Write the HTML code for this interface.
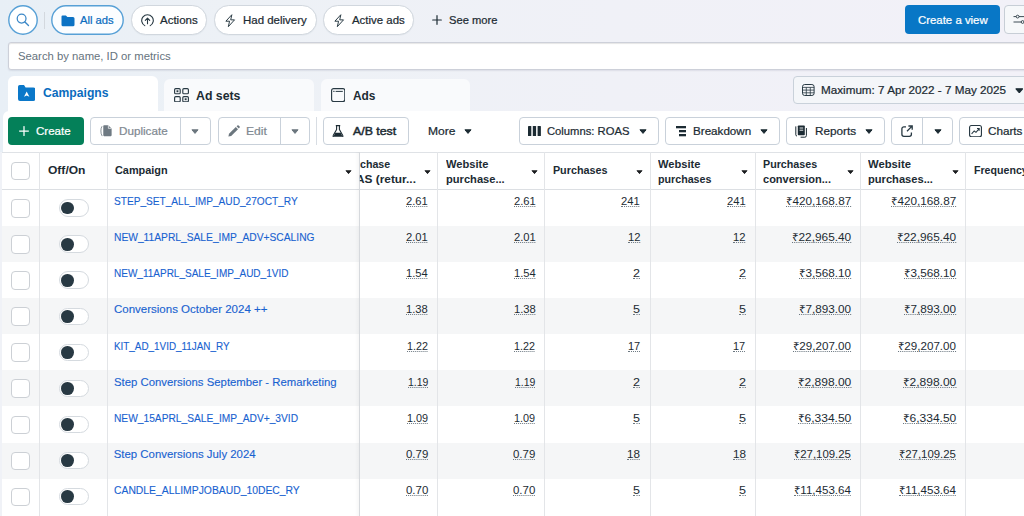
<!DOCTYPE html>
<html lang="en">
<head>
<meta charset="utf-8">
<title>Ads Manager</title>
<style>
*{box-sizing:border-box;margin:0;padding:0}
html,body{width:1024px;height:516px;overflow:hidden}
body{font-family:"Liberation Sans",sans-serif;font-size:11px;color:#1c2b33;background:#f0f2f7;position:relative}
.abs{position:absolute}
#bg{left:0;top:0;width:1024px;height:152px;background:linear-gradient(90deg,#e8eff6 0%,#edf1f6 22%,#f0f1f7 60%,#f2f1f8 100%)}
.pill{position:absolute;top:5.2px;height:29.4px;border-radius:14.7px;border:1px solid #d1d7de;background:#fff;box-shadow:0 0.5px 1px rgba(40,60,90,.06)}
.btn{position:absolute;top:117.25px;height:27.5px;border:1px solid #c9d1da;border-radius:4px;background:#fff}
.caret{position:absolute;width:8px;height:5.2px}
.hc{position:absolute;width:7px;height:4.3px;top:169.6px}
.tab{position:absolute;border-radius:6px 6px 0 0}
#tbl{left:2px;top:151.7px;width:1022px;height:365px;background:#fff;border-top:1px solid #dfe2e6}
.vl{position:absolute;top:152px;width:1px;height:364px;background:#e3e5e8}
.row{position:absolute;left:2px;width:1022px;background:#f5f6f7}
.t{position:absolute;line-height:14px;white-space:nowrap;transform-origin:0 50%;display:block}
.cb{position:absolute;left:11px;width:18.5px;height:18.5px;border:1px solid #ccd0d5;border-radius:4px;background:#fff}
.tg{position:absolute;left:59px;width:29.5px;height:17.5px;border:1px solid #d5dadf;border-radius:9px;background:#fff}
.tg i{position:absolute;left:0.9px;top:1.4px;width:12.8px;height:12.8px;border-radius:50%;background:#283943;display:block}
</style>
</head>
<body>
<div id="bg" class="abs"></div>

<!-- top filter row -->
<svg class="abs" style="left:8px;top:5px" width="30" height="30" viewBox="0 0 30 30"><circle cx="15" cy="15" r="14.2" fill="#fff" stroke="#57a0d6" stroke-width="1.4"/></svg>
<svg class="abs" style="left:15px;top:12px" width="16" height="16" viewBox="0 0 16 16"><circle cx="6.6" cy="6.6" r="4.4" fill="none" stroke="#3b87c7" stroke-width="1.25"/><path d="M9.9 9.9 L13.5 13.5" stroke="#3b87c7" stroke-width="1.35" stroke-linecap="round"/></svg>
<div class="abs" style="left:44px;top:12px;width:1px;height:17px;background:#d3d8de"></div>

<svg class="abs" style="left:51px;top:5px" width="73" height="30" viewBox="0 0 73 30"><rect x="0.8" y="0.8" width="71.4" height="28.4" rx="14.2" fill="#fbfdff" stroke="#57a0d6" stroke-width="1.4"/></svg>
<svg class="abs" style="left:61px;top:14.5px" width="14" height="12" viewBox="0 0 14 12"><path d="M1.5 0.4 H4.9 L6.4 1.9 H12 A1.5 1.5 0 0 1 13.5 3.4 V9.8 A1.5 1.5 0 0 1 12 11.3 H2 A1.5 1.5 0 0 1 0.5 9.8 V1.4 A1 1 0 0 1 1.5 0.4Z" fill="#0b72c4"/></svg>
<div class="pill" style="left:131px;width:76px">
  <svg class="abs" style="left:9px;top:7.7px" width="13" height="13" viewBox="0 0 13 13"><path d="M3.78 11.62 A5.8 5.8 0 1 1 9.22 11.62" fill="none" stroke="#283943" stroke-width="1.1" stroke-linecap="round"/><path d="M6.5 9.8 V4.4 M4.3 6.4 L6.5 4.2 L8.7 6.4" fill="none" stroke="#283943" stroke-width="1.1" stroke-linecap="round" stroke-linejoin="round"/></svg>
</div>
<div class="pill" style="left:214px;width:103px">
  <svg class="abs" style="left:10.2px;top:7.6px" width="10.4" height="13.4" viewBox="0 0 10 13"><path d="M6.6 0.7 L0.8 7 H4.4 L3.2 12.3 L9.2 5.7 H5.5 Z" fill="none" stroke="#283943" stroke-width="0.95" stroke-linejoin="round"/></svg>
</div>
<div class="pill" style="left:323px;width:91px">
  <svg class="abs" style="left:10.2px;top:7.6px" width="10.4" height="13.4" viewBox="0 0 10 13"><path d="M6.6 0.7 L0.8 7 H4.4 L3.2 12.3 L9.2 5.7 H5.5 Z" fill="none" stroke="#283943" stroke-width="0.95" stroke-linejoin="round"/></svg>
</div>
<svg class="abs" style="left:431.5px;top:15.2px" width="10" height="10" viewBox="0 0 10 10"><path d="M5 0.7 V9.3 M0.7 5 H9.3" stroke="#1c2b33" stroke-width="1.2" stroke-linecap="round"/></svg>

<div class="abs" style="left:905.3px;top:5.1px;width:95px;height:28.6px;border-radius:4px;background:#0877c6"></div>
<div class="abs" style="left:1003.8px;top:5.1px;width:40px;height:28.6px;border-radius:4px;border:1px solid #c7ced6;background:#f6f8fa">
  <svg class="abs" style="left:8px;top:8px" width="14" height="12" viewBox="0 0 14 12"><path d="M0.5 2.6 H3.2 M6 2.6 H14 M0.5 8 H8.2 M11 8 H14" stroke="#283943" stroke-width="0.9"/><circle cx="4.6" cy="2.6" r="1.4" fill="none" stroke="#283943" stroke-width="0.9"/><circle cx="9.6" cy="8" r="1.4" fill="none" stroke="#283943" stroke-width="0.9"/></svg>
</div>

<!-- search -->
<div class="abs" style="left:8px;top:42.3px;width:1030px;height:27.4px;border:1px solid #cdd0d9;border-radius:3px;background:#fff;box-shadow:0 1px 1.5px rgba(60,60,100,.10),inset 0 1px 1px rgba(0,0,0,.10)"></div>

<!-- tabs -->
<div class="tab" style="left:8px;top:76px;width:150px;height:36px;background:#fff"></div>
<div class="tab" style="left:164px;top:79.2px;width:150px;height:32.4px;background:#f9fafc"></div>
<div class="tab" style="left:320.5px;top:79.2px;width:149.5px;height:32.4px;background:#f9fafc"></div>
<svg class="abs" style="left:18px;top:85.3px" width="17.4" height="16" viewBox="0 0 17.4 16"><path d="M1.7 0 H6 L7.6 2.4 H15.4 A2 2 0 0 1 17.4 4.4 V14 A2 2 0 0 1 15.4 16 H2 A2 2 0 0 1 0 14 V1.7 A1.7 1.7 0 0 1 1.7 0Z" fill="#0b78c9"/><path d="M8.7 6.6 L11.4 11.8 L8.7 10.5 L6 11.8 Z" fill="#fff"/></svg>
<svg class="abs" style="left:174px;top:88px" width="15" height="14.4" viewBox="0 0 15 14.4"><g fill="none" stroke="#283943" stroke-width="1.15"><rect x="0.6" y="0.6" width="5.6" height="5.2" rx="1.1"/><rect x="8.8" y="0.6" width="5.6" height="5.2" rx="1.1"/><rect x="0.6" y="8.6" width="5.6" height="5.2" rx="1.1"/><rect x="8.8" y="8.6" width="5.6" height="5.2" rx="1.1"/></g><rect x="2.5" y="2.3" width="1.9" height="1.9" fill="#283943"/><rect x="10.7" y="10.3" width="1.9" height="1.9" fill="#283943"/></svg>
<svg class="abs" style="left:330.6px;top:87.7px" width="14.4" height="14.2" viewBox="0 0 14.4 14.2"><rect x="0.6" y="0.6" width="13.2" height="13" rx="2" fill="none" stroke="#283943" stroke-width="1.15"/><path d="M4.6 3.4 H11.8" stroke="#283943" stroke-width="1"/><rect x="2.3" y="2.8" width="1.2" height="1.2" fill="#283943"/></svg>

<!-- date range -->
<div class="abs" style="left:792.5px;top:76px;width:250px;height:28.2px;border:1px solid #c9d1da;border-radius:4px;background:#f4f6f9"></div>
<svg class="abs" style="left:802.4px;top:84.2px" width="12.6" height="12" viewBox="0 0 12.6 12"><rect x="0.5" y="0.5" width="11.6" height="11" rx="2.2" fill="none" stroke="#283943" stroke-width="1"/><path d="M0.5 3.4 H12.1 M0.5 6.1 H12.1 M0.5 8.8 H12.1 M4.3 3.4 V11.5 M8.3 3.4 V11.5" stroke="#283943" stroke-width="0.8"/></svg>
<svg class="caret" style="left:1014.8px;top:87.6px;width:8.6px;height:5.6px" viewBox="0 0 8 5.2"><path d="M0.9 0.8 H7.1 L4 4.4 Z" fill="#1c2b33" stroke="#1c2b33" stroke-width="1" stroke-linejoin="round"/></svg>

<!-- toolbar -->
<div class="abs" style="left:2.5px;top:111.2px;width:1022px;height:42px;background:#fff;border-radius:6px 0 0 0"></div>
<div class="abs" style="left:8px;top:117px;width:76px;height:28px;border-radius:4px;background:#048059"></div>
<svg class="abs" style="left:19.4px;top:126.4px" width="10" height="10" viewBox="0 0 10 10"><path d="M5 0.6 V9.4 M0.6 5 H9.4" stroke="#fff" stroke-width="1.25" stroke-linecap="round"/></svg>

<div class="btn" style="left:90px;width:121px"><i class="abs" style="left:89.2px;top:0;width:1px;height:25.5px;background:#c9d1da"></i>
  <svg class="abs" style="left:8.6px;top:6.6px" width="12.2" height="11.8" viewBox="0 0 13.4 13"><path d="M2.2 1.4 C0.6 3.6 0.4 9.4 2.4 12.2" fill="none" stroke="#6f7a83" stroke-width="0.9"/><path d="M3.6 1.2 A0.9 0.9 0 0 1 4.5 0.3 H9 L12.8 3.8 V11.4 A0.9 0.9 0 0 1 11.9 12.3 H4.5 A0.9 0.9 0 0 1 3.6 11.4 Z" fill="#6f7a83"/><path d="M9.2 0.5 V3.7 H12.6" fill="none" stroke="#fff" stroke-width="0.8"/></svg>
  <svg class="caret" style="left:100.4px;top:10.5px" viewBox="0 0 8 5.2"><path d="M0.9 0.8 H7.1 L4 4.4 Z" fill="#6b767e" stroke="#6b767e" stroke-width="1" stroke-linejoin="round"/></svg>
</div>
<div class="btn" style="left:217.5px;width:92.25px"><i class="abs" style="left:61.4px;top:0;width:1px;height:25.5px;background:#c9d1da"></i>
  <svg class="abs" style="left:9px;top:6.8px" width="12" height="12" viewBox="0 0 12 12"><path d="M0.4 11.6 L1 8.8 L7.8 2 L10 4.2 L3.2 11 Z" fill="#6b767e"/><path d="M8.6 1.2 L9.4 0.4 A0.9 0.9 0 0 1 10.6 0.4 L11.6 1.4 A0.9 0.9 0 0 1 11.6 2.6 L10.8 3.4 Z" fill="#6b767e"/></svg>
  <svg class="caret" style="left:72.2px;top:10.5px" viewBox="0 0 8 5.2"><path d="M0.9 0.8 H7.1 L4 4.4 Z" fill="#6b767e" stroke="#6b767e" stroke-width="1" stroke-linejoin="round"/></svg>
</div>
<div class="abs" style="left:316.3px;top:117px;width:1px;height:28px;background:#d8dde3"></div>
<div class="btn" style="left:323px;width:85.5px">
  <svg class="abs" style="left:8.2px;top:6.6px" width="12" height="12.6" viewBox="0 0 12 12.6"><path d="M3.8 0.6 H8.2 M4.6 0.6 V4.6 L1.2 10.6 A0.9 0.9 0 0 0 2 12 H10 A0.9 0.9 0 0 0 10.8 10.6 L7.4 4.6 V0.6" fill="none" stroke="#1c2b33" stroke-width="1.1" stroke-linejoin="round"/><path d="M3.3 7.8 H8.7 L10.5 11.4 H1.5 Z" fill="#1c2b33"/></svg>
</div>
<svg class="caret" style="left:463.6px;top:128.9px" viewBox="0 0 8 5.2"><path d="M0.9 0.8 H7.1 L4 4.4 Z" fill="#1c2b33" stroke="#1c2b33" stroke-width="1" stroke-linejoin="round"/></svg>

<div class="btn" style="left:519px;width:140px">
  <svg class="abs" style="left:7.8px;top:8px" width="13" height="10.2" viewBox="0 0 13 10.2"><rect x="0" y="0" width="3.3" height="10.2" rx="0.6" fill="#1c2b33"/><rect x="4.8" y="0" width="3.3" height="10.2" rx="0.6" fill="#1c2b33"/><rect x="9.6" y="0" width="3.3" height="10.2" rx="0.6" fill="#1c2b33"/></svg>
  <svg class="caret" style="left:119px;top:10.5px" viewBox="0 0 8 5.2"><path d="M0.9 0.8 H7.1 L4 4.4 Z" fill="#1c2b33" stroke="#1c2b33" stroke-width="1" stroke-linejoin="round"/></svg>
</div>
<div class="btn" style="left:665px;width:114.75px">
  <svg class="abs" style="left:9.7px;top:8px" width="10.6" height="10.4" viewBox="0 0 10.6 10.4"><rect x="0" y="0" width="10.6" height="2.3" fill="#1c2b33"/><rect x="3" y="4" width="7.6" height="2.3" fill="#1c2b33"/><rect x="3" y="8" width="7.6" height="2.3" fill="#1c2b33"/></svg>
  <svg class="caret" style="left:94.4px;top:10.5px" viewBox="0 0 8 5.2"><path d="M0.9 0.8 H7.1 L4 4.4 Z" fill="#1c2b33" stroke="#1c2b33" stroke-width="1" stroke-linejoin="round"/></svg>
</div>
<div class="btn" style="left:786px;width:99px">
  <svg class="abs" style="left:8px;top:6.6px" width="13" height="13" viewBox="0 0 13 13"><path d="M0.8 1.4 V9.8 A1.2 1.2 0 0 0 2 11" fill="none" stroke="#1c2b33" stroke-width="1"/><rect x="2.8" y="0.4" width="7" height="9.8" rx="0.8" fill="#1c2b33"/><path d="M4.6 3 H8.2 M4.6 5.2 H8.2" stroke="#fff" stroke-width="0.9"/><path d="M11.4 3 V10.6 A1.6 1.6 0 0 1 9.8 12.2 H5.6" fill="none" stroke="#1c2b33" stroke-width="1"/></svg>
  <svg class="caret" style="left:78.2px;top:10.5px" viewBox="0 0 8 5.2"><path d="M0.9 0.8 H7.1 L4 4.4 Z" fill="#1c2b33" stroke="#1c2b33" stroke-width="1" stroke-linejoin="round"/></svg>
</div>
<div class="btn" style="left:891px;width:62px"><i class="abs" style="left:30px;top:0;width:1px;height:25.5px;background:#c9d1da"></i>
  <svg class="abs" style="left:8.5px;top:7px" width="12.6" height="12" viewBox="0 0 12.6 12"><path d="M5 1.8 H2.9 A2 2 0 0 0 0.9 3.8 V9.3 A2 2 0 0 0 2.9 11.3 H8.4 A2 2 0 0 0 10.4 9.3 V7.4" fill="none" stroke="#283943" stroke-width="1.3"/><path d="M6 6.2 L10.8 1.4 M7.4 1 H11.2 V4.8" fill="none" stroke="#283943" stroke-width="1.3"/></svg>
  <svg class="caret" style="left:41.6px;top:10.5px" viewBox="0 0 8 5.2"><path d="M0.9 0.8 H7.1 L4 4.4 Z" fill="#1c2b33" stroke="#1c2b33" stroke-width="1" stroke-linejoin="round"/></svg>
</div>
<div class="btn" style="left:959px;width:80px">
  <svg class="abs" style="left:8.7px;top:6.8px" width="13" height="12.4" viewBox="0 0 13 12.4"><rect x="0.55" y="0.55" width="11.9" height="11.3" rx="2" fill="none" stroke="#283943" stroke-width="1.15"/><path d="M2.6 8.8 L5.2 6 L7 7.4 L10 3.8 M8 3.6 H10.2 V5.8" fill="none" stroke="#283943" stroke-width="1.05"/></svg>
</div>

<!-- table -->
<div id="tbl" class="abs"></div>
<div class="row" style="top:226.08px;height:36.08px"></div>
<div class="row" style="top:298.24px;height:36.08px"></div>
<div class="row" style="top:370.40px;height:36.08px"></div>
<div class="row" style="top:442.56px;height:36.08px"></div>
<div class="abs" style="left:2px;top:189.1px;width:1022px;height:1px;background:#dcdfe3"></div>
<div class="vl" style="left:39.3px"></div>
<div class="vl" style="left:107px"></div>
<div class="vl" style="left:437px"></div>
<div class="vl" style="left:544px"></div>
<div class="vl" style="left:649.5px"></div>
<div class="vl" style="left:755px"></div>
<div class="vl" style="left:860px"></div>
<div class="vl" style="left:965px"></div>
<div class="abs" style="left:358.8px;top:152px;width:1.6px;height:364px;background:#d6d9dd"></div>
<div class="abs" style="left:355px;top:152px;width:4px;height:364px;background:linear-gradient(90deg,rgba(0,0,0,0),rgba(0,0,0,.03))"></div>

<div class="cb" style="top:161.7px"></div>
<svg class="hc" style="left:344.9px" viewBox="0 0 8 5.2"><path d="M0.9 0.8 H7.1 L4 4.4 Z" fill="#1c1e21" stroke="#1c1e21" stroke-width="1" stroke-linejoin="round"/></svg>
<svg class="hc" style="left:424.0px" viewBox="0 0 8 5.2"><path d="M0.9 0.8 H7.1 L4 4.4 Z" fill="#1c1e21" stroke="#1c1e21" stroke-width="1" stroke-linejoin="round"/></svg>
<svg class="hc" style="left:530.8px" viewBox="0 0 8 5.2"><path d="M0.9 0.8 H7.1 L4 4.4 Z" fill="#1c1e21" stroke="#1c1e21" stroke-width="1" stroke-linejoin="round"/></svg>
<svg class="hc" style="left:635.9px" viewBox="0 0 8 5.2"><path d="M0.9 0.8 H7.1 L4 4.4 Z" fill="#1c1e21" stroke="#1c1e21" stroke-width="1" stroke-linejoin="round"/></svg>
<svg class="hc" style="left:741.0px" viewBox="0 0 8 5.2"><path d="M0.9 0.8 H7.1 L4 4.4 Z" fill="#1c1e21" stroke="#1c1e21" stroke-width="1" stroke-linejoin="round"/></svg>
<svg class="hc" style="left:846.5px" viewBox="0 0 8 5.2"><path d="M0.9 0.8 H7.1 L4 4.4 Z" fill="#1c1e21" stroke="#1c1e21" stroke-width="1" stroke-linejoin="round"/></svg>
<svg class="hc" style="left:951.7px" viewBox="0 0 8 5.2"><path d="M0.9 0.8 H7.1 L4 4.4 Z" fill="#1c1e21" stroke="#1c1e21" stroke-width="1" stroke-linejoin="round"/></svg>

<div class="cb" style="top:199.0px"></div>
<div class="tg" style="top:199.3px"><i></i></div>
<div class="cb" style="top:235.1px"></div>
<div class="tg" style="top:235.4px"><i></i></div>
<div class="cb" style="top:271.2px"></div>
<div class="tg" style="top:271.4px"><i></i></div>
<div class="cb" style="top:307.3px"></div>
<div class="tg" style="top:307.5px"><i></i></div>
<div class="cb" style="top:343.4px"></div>
<div class="tg" style="top:343.6px"><i></i></div>
<div class="cb" style="top:379.4px"></div>
<div class="tg" style="top:379.7px"><i></i></div>
<div class="cb" style="top:415.5px"></div>
<div class="tg" style="top:415.8px"><i></i></div>
<div class="cb" style="top:451.6px"></div>
<div class="tg" style="top:451.9px"><i></i></div>
<div class="cb" style="top:487.7px"></div>
<div class="tg" style="top:487.9px"><i></i></div>
<span class="t" style="left:80.15px;top:13.44px;font-size:11px;color:#0b6cbe;transform:scaleX(1.0202);-webkit-text-stroke:0.22px;">All ads</span>
<span class="t" style="left:159.65px;top:13.44px;font-size:11px;color:#1c2b33;transform:scaleX(1.0450);-webkit-text-stroke:0.22px;">Actions</span>
<span class="t" style="left:242.65px;top:13.44px;font-size:11px;color:#1c2b33;transform:scaleX(1.0419);-webkit-text-stroke:0.22px;">Had delivery</span>
<span class="t" style="left:351.65px;top:13.44px;font-size:11px;color:#1c2b33;transform:scaleX(1.0384);-webkit-text-stroke:0.22px;">Active ads</span>
<span class="t" style="left:449.40px;top:13.44px;font-size:11px;color:#1c2b33;transform:scaleX(1.0157);-webkit-text-stroke:0.22px;">See more</span>
<span class="t" style="left:918.15px;top:12.94px;font-size:11px;color:#fff;transform:scaleX(1.0362);-webkit-text-stroke:0.22px;">Create a view</span>
<span class="t" style="left:18.15px;top:49.09px;font-size:11px;color:#66737d;transform:scaleX(1.0279);">Search by name, ID or metrics</span>
<span class="t" style="left:43.05px;top:86.44px;font-size:12px;color:#0b6cbe;font-weight:bold;transform:scaleX(1.0126);">Campaigns</span>
<span class="t" style="left:195.90px;top:88.54px;font-size:12px;color:#1c2b33;font-weight:bold;transform:scaleX(1.0252);">Ad sets</span>
<span class="t" style="left:352.65px;top:88.54px;font-size:12px;color:#1c2b33;font-weight:bold;transform:scaleX(0.9902);">Ads</span>
<span class="t" style="left:821.40px;top:83.44px;font-size:11px;color:#1c2b33;transform:scaleX(1.0614);-webkit-text-stroke:0.22px;">Maximum: 7 Apr 2022 - 7 May 2025</span>
<span class="t" style="left:36.40px;top:124.19px;font-size:11px;color:#fff;transform:scaleX(1.0505);-webkit-text-stroke:0.22px;">Create</span>
<span class="t" style="left:118.65px;top:124.19px;font-size:11px;color:#7f8a92;transform:scaleX(1.0619);-webkit-text-stroke:0.22px;">Duplicate</span>
<span class="t" style="left:245.90px;top:124.19px;font-size:11px;color:#7f8a92;transform:scaleX(1.1044);-webkit-text-stroke:0.22px;">Edit</span>
<span class="t" style="left:352.65px;top:124.19px;font-size:11px;color:#1c2b33;transform:scaleX(1.1212);-webkit-text-stroke:0.45px;">A/B test</span>
<span class="t" style="left:427.65px;top:124.19px;font-size:11px;color:#1c2b33;transform:scaleX(1.0953);-webkit-text-stroke:0.22px;">More</span>
<span class="t" style="left:547.40px;top:124.19px;font-size:11px;color:#1c2b33;transform:scaleX(1.0216);-webkit-text-stroke:0.22px;">Columns: ROAS</span>
<span class="t" style="left:693.40px;top:124.19px;font-size:11px;color:#1c2b33;transform:scaleX(1.0573);-webkit-text-stroke:0.22px;">Breakdown</span>
<span class="t" style="left:815.15px;top:124.19px;font-size:11px;color:#1c2b33;transform:scaleX(1.0693);-webkit-text-stroke:0.22px;">Reports</span>
<span class="t" style="left:987.65px;top:124.19px;font-size:11px;color:#1c2b33;transform:scaleX(1.0631);-webkit-text-stroke:0.22px;">Charts</span>
<span class="t" style="left:47.90px;top:163.46px;font-size:10.8px;color:#1c2b33;font-weight:bold;transform:scaleX(1.1148);">Off/On</span>
<span class="t" style="left:115.15px;top:163.46px;font-size:10.8px;color:#1c2b33;font-weight:bold;transform:scaleX(1.0095);">Campaign</span>
<span class="t" style="left:359.65px;top:157.06px;font-size:10.8px;color:#1c2b33;font-weight:bold;transform:scaleX(0.9861);">chase</span>
<span class="t" style="left:356.15px;top:172.06px;font-size:10.8px;color:#1c2b33;font-weight:bold;transform:scaleX(1.0978);clip-path:inset(-2px -2px -2px 3.5px);">AS (retur...</span>
<span class="t" style="left:445.90px;top:157.06px;font-size:10.8px;color:#1c2b33;font-weight:bold;transform:scaleX(1.0303);">Website</span>
<span class="t" style="left:445.90px;top:172.06px;font-size:10.8px;color:#1c2b33;font-weight:bold;transform:scaleX(1.0295);">purchase...</span>
<span class="t" style="left:552.90px;top:163.46px;font-size:10.8px;color:#1c2b33;font-weight:bold;">Purchases</span>
<span class="t" style="left:658.40px;top:157.06px;font-size:10.8px;color:#1c2b33;font-weight:bold;transform:scaleX(1.0303);">Website</span>
<span class="t" style="left:658.40px;top:172.06px;font-size:10.8px;color:#1c2b33;font-weight:bold;transform:scaleX(0.9895);">purchases</span>
<span class="t" style="left:763.40px;top:157.06px;font-size:10.8px;color:#1c2b33;font-weight:bold;transform:scaleX(0.9922);">Purchases</span>
<span class="t" style="left:763.40px;top:172.06px;font-size:10.8px;color:#1c2b33;font-weight:bold;transform:scaleX(1.0201);">conversion...</span>
<span class="t" style="left:868.40px;top:157.06px;font-size:10.8px;color:#1c2b33;font-weight:bold;transform:scaleX(1.0424);">Website</span>
<span class="t" style="left:868.40px;top:172.06px;font-size:10.8px;color:#1c2b33;font-weight:bold;transform:scaleX(1.0307);">purchases...</span>
<span class="t" style="left:974.15px;top:163.46px;font-size:10.8px;color:#1c2b33;font-weight:bold;transform:scaleX(0.9833);">Frequency</span>
<span class="t" style="left:113.75px;top:194.06px;font-size:11.4px;color:#1862d0;transform:scaleX(0.8882);-webkit-text-stroke:0.12px;">STEP_SET_ALL_IMP_AUD_27OCT_RY</span>
<span class="t" style="left:406.25px;top:194.00px;font-size:11px;color:#1c2b33;transform:scaleX(1.0177);border-bottom:1px dotted #6b7780;height:13px;">2.61</span>
<span class="t" style="left:513.55px;top:194.00px;font-size:11px;color:#1c2b33;transform:scaleX(1.0177);border-bottom:1px dotted #6b7780;height:13px;">2.61</span>
<span class="t" style="left:621.45px;top:194.00px;font-size:11px;color:#1c2b33;transform:scaleX(1.0186);border-bottom:1px dotted #6b7780;height:13px;">241</span>
<span class="t" style="left:726.85px;top:194.00px;font-size:11px;color:#1c2b33;transform:scaleX(1.0186);border-bottom:1px dotted #6b7780;height:13px;">241</span>
<span class="t" style="left:785.75px;top:194.00px;font-size:11px;color:#1c2b33;transform:scaleX(1.0678);border-bottom:1px dotted #6b7780;height:13px;">₹420,168.87</span>
<span class="t" style="left:891.15px;top:194.00px;font-size:11px;color:#1c2b33;transform:scaleX(1.0678);border-bottom:1px dotted #6b7780;height:13px;">₹420,168.87</span>
<span class="t" style="left:113.75px;top:230.06px;font-size:11.4px;color:#1862d0;transform:scaleX(0.8993);-webkit-text-stroke:0.12px;">NEW_11APRL_SALE_IMP_ADV+SCALING</span>
<span class="t" style="left:406.25px;top:230.00px;font-size:11px;color:#1c2b33;transform:scaleX(1.0177);border-bottom:1px dotted #6b7780;height:13px;">2.01</span>
<span class="t" style="left:513.55px;top:230.00px;font-size:11px;color:#1c2b33;transform:scaleX(1.0177);border-bottom:1px dotted #6b7780;height:13px;">2.01</span>
<span class="t" style="left:627.65px;top:230.00px;font-size:11px;color:#1c2b33;transform:scaleX(1.0204);border-bottom:1px dotted #6b7780;height:13px;">12</span>
<span class="t" style="left:733.05px;top:230.00px;font-size:11px;color:#1c2b33;transform:scaleX(1.0204);border-bottom:1px dotted #6b7780;height:13px;">12</span>
<span class="t" style="left:791.75px;top:230.00px;font-size:11px;color:#1c2b33;transform:scaleX(1.0776);border-bottom:1px dotted #6b7780;height:13px;">₹22,965.40</span>
<span class="t" style="left:897.15px;top:230.00px;font-size:11px;color:#1c2b33;transform:scaleX(1.0776);border-bottom:1px dotted #6b7780;height:13px;">₹22,965.40</span>
<span class="t" style="left:113.75px;top:266.06px;font-size:11.4px;color:#1862d0;transform:scaleX(0.8782);-webkit-text-stroke:0.12px;">NEW_11APRL_SALE_IMP_AUD_1VID</span>
<span class="t" style="left:406.25px;top:266.00px;font-size:11px;color:#1c2b33;transform:scaleX(1.0177);border-bottom:1px dotted #6b7780;height:13px;">1.54</span>
<span class="t" style="left:513.55px;top:266.00px;font-size:11px;color:#1c2b33;transform:scaleX(1.0177);border-bottom:1px dotted #6b7780;height:13px;">1.54</span>
<span class="t" style="left:633.15px;top:266.00px;font-size:11px;color:#1c2b33;transform:scaleX(1.1429);border-bottom:1px dotted #6b7780;height:13px;">2</span>
<span class="t" style="left:738.55px;top:266.00px;font-size:11px;color:#1c2b33;transform:scaleX(1.1429);border-bottom:1px dotted #6b7780;height:13px;">2</span>
<span class="t" style="left:798.95px;top:266.00px;font-size:11px;color:#1c2b33;transform:scaleX(1.0650);border-bottom:1px dotted #6b7780;height:13px;">₹3,568.10</span>
<span class="t" style="left:904.35px;top:266.00px;font-size:11px;color:#1c2b33;transform:scaleX(1.0650);border-bottom:1px dotted #6b7780;height:13px;">₹3,568.10</span>
<span class="t" style="left:113.75px;top:302.06px;font-size:11.4px;color:#1862d0;transform:scaleX(1.0094);-webkit-text-stroke:0.12px;">Conversions October 2024 ++</span>
<span class="t" style="left:406.25px;top:302.00px;font-size:11px;color:#1c2b33;transform:scaleX(1.0177);border-bottom:1px dotted #6b7780;height:13px;">1.38</span>
<span class="t" style="left:513.55px;top:302.00px;font-size:11px;color:#1c2b33;transform:scaleX(1.0177);border-bottom:1px dotted #6b7780;height:13px;">1.38</span>
<span class="t" style="left:633.15px;top:302.00px;font-size:11px;color:#1c2b33;transform:scaleX(1.1429);border-bottom:1px dotted #6b7780;height:13px;">5</span>
<span class="t" style="left:738.55px;top:302.00px;font-size:11px;color:#1c2b33;transform:scaleX(1.1429);border-bottom:1px dotted #6b7780;height:13px;">5</span>
<span class="t" style="left:798.95px;top:302.00px;font-size:11px;color:#1c2b33;transform:scaleX(1.0650);border-bottom:1px dotted #6b7780;height:13px;">₹7,893.00</span>
<span class="t" style="left:904.35px;top:302.00px;font-size:11px;color:#1c2b33;transform:scaleX(1.0650);border-bottom:1px dotted #6b7780;height:13px;">₹7,893.00</span>
<span class="t" style="left:113.75px;top:339.06px;font-size:11.4px;color:#1862d0;transform:scaleX(0.8673);-webkit-text-stroke:0.12px;">KIT_AD_1VID_11JAN_RY</span>
<span class="t" style="left:407.15px;top:339.00px;font-size:11px;color:#1c2b33;transform:scaleX(0.9756);border-bottom:1px dotted #6b7780;height:13px;">1.22</span>
<span class="t" style="left:514.45px;top:339.00px;font-size:11px;color:#1c2b33;transform:scaleX(0.9756);border-bottom:1px dotted #6b7780;height:13px;">1.22</span>
<span class="t" style="left:627.95px;top:339.00px;font-size:11px;color:#1c2b33;transform:scaleX(0.9959);border-bottom:1px dotted #6b7780;height:13px;">17</span>
<span class="t" style="left:733.35px;top:339.00px;font-size:11px;color:#1c2b33;transform:scaleX(0.9959);border-bottom:1px dotted #6b7780;height:13px;">17</span>
<span class="t" style="left:792.95px;top:339.00px;font-size:11px;color:#1c2b33;transform:scaleX(1.0557);border-bottom:1px dotted #6b7780;height:13px;">₹29,207.00</span>
<span class="t" style="left:898.35px;top:339.00px;font-size:11px;color:#1c2b33;transform:scaleX(1.0557);border-bottom:1px dotted #6b7780;height:13px;">₹29,207.00</span>
<span class="t" style="left:113.75px;top:375.06px;font-size:11.4px;color:#1862d0;transform:scaleX(0.9960);-webkit-text-stroke:0.12px;">Step Conversions September - Remarketing</span>
<span class="t" style="left:407.65px;top:375.00px;font-size:11px;color:#1c2b33;transform:scaleX(0.9523);border-bottom:1px dotted #6b7780;height:13px;">1.19</span>
<span class="t" style="left:514.95px;top:375.00px;font-size:11px;color:#1c2b33;transform:scaleX(0.9523);border-bottom:1px dotted #6b7780;height:13px;">1.19</span>
<span class="t" style="left:633.15px;top:375.00px;font-size:11px;color:#1c2b33;transform:scaleX(1.1429);border-bottom:1px dotted #6b7780;height:13px;">2</span>
<span class="t" style="left:738.55px;top:375.00px;font-size:11px;color:#1c2b33;transform:scaleX(1.1429);border-bottom:1px dotted #6b7780;height:13px;">2</span>
<span class="t" style="left:797.65px;top:375.00px;font-size:11px;color:#1c2b33;transform:scaleX(1.0916);border-bottom:1px dotted #6b7780;height:13px;">₹2,898.00</span>
<span class="t" style="left:903.05px;top:375.00px;font-size:11px;color:#1c2b33;transform:scaleX(1.0916);border-bottom:1px dotted #6b7780;height:13px;">₹2,898.00</span>
<span class="t" style="left:113.75px;top:411.06px;font-size:11.4px;color:#1862d0;transform:scaleX(0.8956);-webkit-text-stroke:0.12px;">NEW_15APRL_SALE_IMP_ADV+_3VID</span>
<span class="t" style="left:406.95px;top:411.00px;font-size:11px;color:#1c2b33;transform:scaleX(0.9850);border-bottom:1px dotted #6b7780;height:13px;">1.09</span>
<span class="t" style="left:514.25px;top:411.00px;font-size:11px;color:#1c2b33;transform:scaleX(0.9850);border-bottom:1px dotted #6b7780;height:13px;">1.09</span>
<span class="t" style="left:633.15px;top:411.00px;font-size:11px;color:#1c2b33;transform:scaleX(1.1429);border-bottom:1px dotted #6b7780;height:13px;">5</span>
<span class="t" style="left:738.55px;top:411.00px;font-size:11px;color:#1c2b33;transform:scaleX(1.1429);border-bottom:1px dotted #6b7780;height:13px;">5</span>
<span class="t" style="left:797.65px;top:411.00px;font-size:11px;color:#1c2b33;transform:scaleX(1.0916);border-bottom:1px dotted #6b7780;height:13px;">₹6,334.50</span>
<span class="t" style="left:903.05px;top:411.00px;font-size:11px;color:#1c2b33;transform:scaleX(1.0916);border-bottom:1px dotted #6b7780;height:13px;">₹6,334.50</span>
<span class="t" style="left:113.75px;top:447.06px;font-size:11.4px;color:#1862d0;-webkit-text-stroke:0.12px;">Step Conversions July 2024</span>
<span class="t" style="left:405.75px;top:447.00px;font-size:11px;color:#1c2b33;transform:scaleX(1.0410);border-bottom:1px dotted #6b7780;height:13px;">0.79</span>
<span class="t" style="left:513.05px;top:447.00px;font-size:11px;color:#1c2b33;transform:scaleX(1.0410);border-bottom:1px dotted #6b7780;height:13px;">0.79</span>
<span class="t" style="left:627.15px;top:447.00px;font-size:11px;color:#1c2b33;transform:scaleX(1.0612);border-bottom:1px dotted #6b7780;height:13px;">18</span>
<span class="t" style="left:732.55px;top:447.00px;font-size:11px;color:#1c2b33;transform:scaleX(1.0612);border-bottom:1px dotted #6b7780;height:13px;">18</span>
<span class="t" style="left:794.05px;top:447.00px;font-size:11px;color:#1c2b33;transform:scaleX(1.0357);border-bottom:1px dotted #6b7780;height:13px;">₹27,109.25</span>
<span class="t" style="left:899.45px;top:447.00px;font-size:11px;color:#1c2b33;transform:scaleX(1.0357);border-bottom:1px dotted #6b7780;height:13px;">₹27,109.25</span>
<span class="t" style="left:113.75px;top:483.06px;font-size:11.4px;color:#1862d0;transform:scaleX(0.9095);-webkit-text-stroke:0.12px;">CANDLE_ALLIMPJOBAUD_10DEC_RY</span>
<span class="t" style="left:405.75px;top:483.00px;font-size:11px;color:#1c2b33;transform:scaleX(1.0410);border-bottom:1px dotted #6b7780;height:13px;">0.70</span>
<span class="t" style="left:513.05px;top:483.00px;font-size:11px;color:#1c2b33;transform:scaleX(1.0410);border-bottom:1px dotted #6b7780;height:13px;">0.70</span>
<span class="t" style="left:633.15px;top:483.00px;font-size:11px;color:#1c2b33;transform:scaleX(1.1429);border-bottom:1px dotted #6b7780;height:13px;">5</span>
<span class="t" style="left:738.55px;top:483.00px;font-size:11px;color:#1c2b33;transform:scaleX(1.1429);border-bottom:1px dotted #6b7780;height:13px;">5</span>
<span class="t" style="left:794.05px;top:483.00px;font-size:11px;color:#1c2b33;transform:scaleX(1.0513);border-bottom:1px dotted #6b7780;height:13px;">₹11,453.64</span>
<span class="t" style="left:899.45px;top:483.00px;font-size:11px;color:#1c2b33;transform:scaleX(1.0513);border-bottom:1px dotted #6b7780;height:13px;">₹11,453.64</span>
</body>
</html>
